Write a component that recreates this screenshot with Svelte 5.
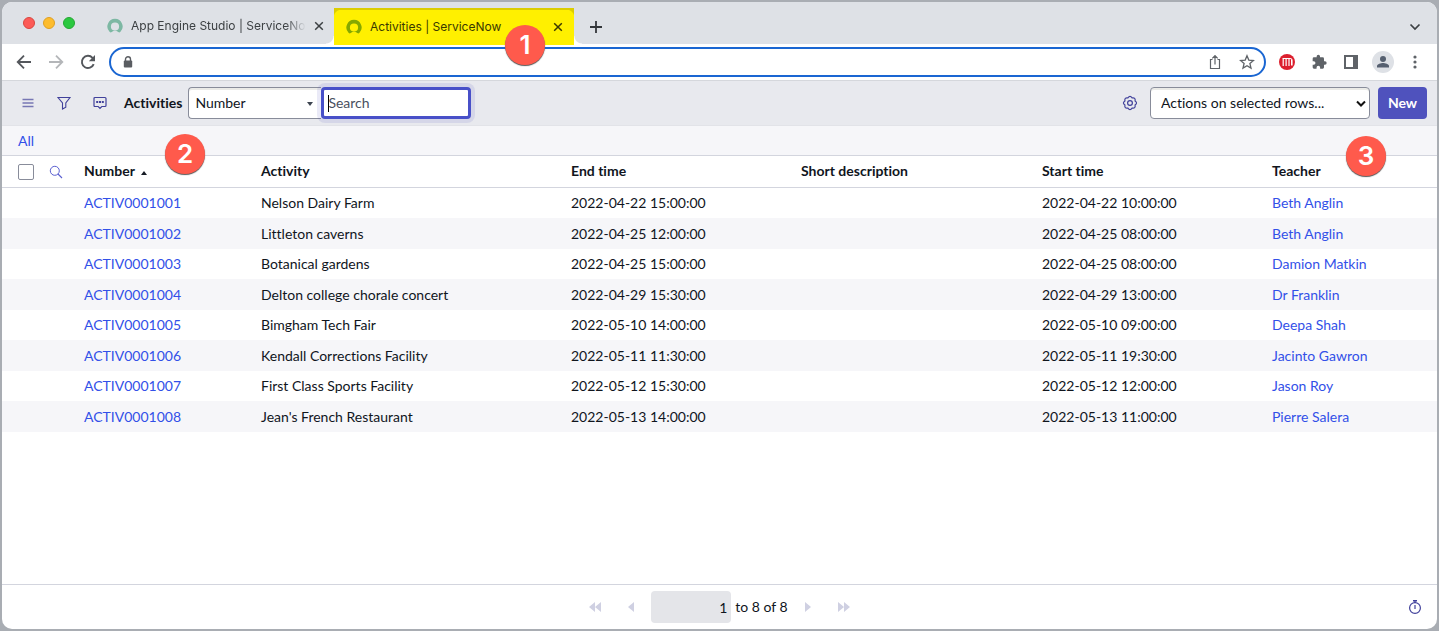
<script>
  const columns = ['Activity', 'End time', 'Short description', 'Start time'];
  const rows = [
    ['ACTIV0001001', 'Nelson Dairy Farm', '2022-04-22 15:00:00', '', '2022-04-22 10:00:00', 'Beth Anglin'],
    ['ACTIV0001002', 'Littleton caverns', '2022-04-25 12:00:00', '', '2022-04-25 08:00:00', 'Beth Anglin'],
    ['ACTIV0001003', 'Botanical gardens', '2022-04-25 15:00:00', '', '2022-04-25 08:00:00', 'Damion Matkin'],
    ['ACTIV0001004', 'Delton college chorale concert', '2022-04-29 15:30:00', '', '2022-04-29 13:00:00', 'Dr Franklin'],
    ['ACTIV0001005', 'Bimgham Tech Fair', '2022-05-10 14:00:00', '', '2022-05-10 09:00:00', 'Deepa Shah'],
    ['ACTIV0001006', 'Kendall Corrections Facility', '2022-05-11 11:30:00', '', '2022-05-11 19:30:00', 'Jacinto Gawron'],
    ['ACTIV0001007', 'First Class Sports Facility', '2022-05-12 15:30:00', '', '2022-05-12 12:00:00', 'Jason Roy'],
    ['ACTIV0001008', "Jean's French Restaurant", '2022-05-13 14:00:00', '', '2022-05-13 11:00:00', 'Pierre Salera']
  ];
</script>

{#snippet favicon(color)}
  <svg class="favicon" width="16" height="16" viewBox="0 0 16 16" aria-hidden="true">
    <path d="M8 .8A7.700 7.700 0 0 0 2.700 14c.6.6 1.400.6 2 .1a5.400 5.400 0 0 1 6.600 0c.6.5 1.400.5 2-.1A7.700 7.700 0 0 0 8 .8Zm0 11.800a4.100 4.100 0 1 1 0-8.200 4.100 4.100 0 0 1 0 8.200Z" fill={color} />
  </svg>
{/snippet}

{#snippet cross()}
  <svg width="10" height="10" viewBox="0 0 10 10" aria-hidden="true">
    <path d="M1.200 1.200l7.600 7.600M8.800 1.200L1.200 8.800" stroke="currentColor" stroke-width="1.500" />
  </svg>
{/snippet}

<div class="frame">
  <div class="window">
    <div class="tabstrip">
      <div class="lights"><i class="red"></i><i class="amber"></i><i class="green"></i></div>
      <div class="tab">
        {@render favicon('#7db8a3')}
        <span class="tab-title faded">App Engine Studio | ServiceNow</span>
        <button aria-label="Close tab">{@render cross()}</button>
      </div>
      <div class="tab active">
        {@render favicon('#85a800')}
        <span class="tab-title">Activities | ServiceNow</span>
        <button aria-label="Close tab">{@render cross()}</button>
        <span class="badge one">1</span>
      </div>
      <button class="plus" aria-label="New tab">
        <svg width="12" height="12" viewBox="0 0 12 12"><path d="M6 0v12M0 6h12" stroke="#33363a" stroke-width="1.800" /></svg>
      </button>
      <button class="tab-list" aria-label="Search tabs">
        <svg width="12" height="12" viewBox="0 0 12 12"><path d="M1.500 3.500L6 8l4.500-4.500" fill="none" stroke="#3c4043" stroke-width="1.700" /></svg>
      </button>
    </div>

    <div class="browserbar">
      <button aria-label="Back">
        <svg width="16" height="16" viewBox="0 0 16 16"><path d="M15 8H2M8 1.700L1.700 8 8 14.300" fill="none" stroke="#54575c" stroke-width="1.800" /></svg>
      </button>
      <button aria-label="Forward">
        <svg width="16" height="16" viewBox="0 0 16 16"><path d="M1 8h13M8 1.700L14.300 8 8 14.300" fill="none" stroke="#b4b6b9" stroke-width="1.800" /></svg>
      </button>
      <button aria-label="Reload">
        <svg width="16" height="16" viewBox="0 0 16 16"><path d="M13.700 10.100A6.100 6.100 0 1 1 12.500 3.800L14 5.300" fill="none" stroke="#54575c" stroke-width="1.900" /><path d="M15 1v6.200H8.800z" fill="#54575c" /></svg>
      </button>
      <div class="address">
        <svg width="10" height="12" viewBox="0 0 10 12" aria-hidden="true"><path d="M2.500 5V3.300a2.500 2.500 0 0 1 5 0V5" fill="none" stroke="#5a5d62" stroke-width="1.400" /><rect x="0.800" y="4.500" width="8.400" height="7" rx="1" fill="#5a5d62" /></svg>
        <input class="url" type="text" aria-label="Address" />
        <button aria-label="Share">
          <svg width="16" height="16" viewBox="0 0 16 16"><path d="M5.500 5.500h-2v9h9v-9h-2M8 10.500V1.800M5.300 4.300L8 1.600l2.700 2.700" fill="none" stroke="#5f6368" stroke-width="1.200" /></svg>
        </button>
        <button aria-label="Bookmark">
          <svg width="16" height="16" viewBox="0 0 16 16"><path d="M8 1.800l1.800 4.300 4.700.4-3.600 3 1.100 4.600L8 11.700l-4 2.400 1.100-4.600-3.600-3 4.700-.4z" fill="none" stroke="#5f6368" stroke-width="1.300" /></svg>
        </button>
      </div>
      <button aria-label="Extension">
        <svg width="16" height="16" viewBox="0 0 16 16"><circle cx="8" cy="8" r="8" fill="#dc1f2e" /><path d="M3.500 4.500h7.500q2 0 2 2v5M4.200 4v8M7.100 4v8M10 4v8M12.600 6v5.500" fill="none" stroke="#fff" stroke-width="1.200" /></svg>
      </button>
      <button aria-label="Extensions">
        <svg width="16" height="16" viewBox="0 0 24 24"><path d="M21 11h-1.500V7a2 2 0 0 0-2-2h-4V3.500a2.500 2.500 0 0 0-5 0V5h-4a2 2 0 0 0-2 2v3.800H4a2.700 2.700 0 0 1 0 5.400H2.500V20a2 2 0 0 0 2 2h3.800v-1.500a2.700 2.700 0 0 1 5.400 0V22h3.800a2 2 0 0 0 2-2v-4H21a2.500 2.500 0 0 0 0-5z" fill="#5f6368" /></svg>
      </button>
      <button aria-label="Side panel">
        <svg width="16" height="16" viewBox="0 0 16 16"><rect x="1" y="1" width="14" height="14" fill="#5f6368" /><rect x="3" y="3" width="7" height="10" fill="#fff" /></svg>
      </button>
      <button class="profile" aria-label="Profile">
        <svg width="22" height="22" viewBox="0 0 22 22"><circle cx="11" cy="11" r="11" fill="#dee1e6" /><circle cx="11" cy="8" r="3" fill="#566070" /><path d="M5 16.500v-1.500c0-2 4-3 6-3s6 1 6 3v1.500z" fill="#566070" /></svg>
      </button>
      <button aria-label="Menu">
        <svg width="16" height="16" viewBox="0 0 16 16"><g fill="#5f6368"><circle cx="8" cy="3" r="1.600" /><circle cx="8" cy="8" r="1.600" /><circle cx="8" cy="13" r="1.600" /></g></svg>
      </button>
    </div>

    <header>
      <button aria-label="List controls">
        <svg width="16" height="16" viewBox="0 0 16 16"><path d="M2.500 4.500h11M2.500 8h11M2.500 11.500h11" stroke="#7777b4" stroke-width="1.700" /></svg>
      </button>
      <button aria-label="Filter">
        <svg width="16" height="16" viewBox="0 0 16 16"><path d="M2 2.500h12L9.800 8v4.200L6.500 14V8z" fill="none" stroke="#41419b" stroke-width="1.100" /></svg>
      </button>
      <button aria-label="Activity stream">
        <svg width="16" height="16" viewBox="0 0 16 16"><path d="M3 2.500h10q1 0 1 1v7q0 1-1 1H9.800L8 13.300 6.200 11.500H3q-1 0-1-1v-7q0-1 1-1z" fill="none" stroke="#41419b" stroke-width="1.200" /><path d="M4.200 7h2M7 7h2M9.800 7h2" stroke="#41419b" stroke-width="2" /></svg>
      </button>
      <h1>Activities</h1>
      <div class="search-group">
        <div class="field-pick">
          <select aria-label="Search field"><option>Number</option></select>
          <i></i>
        </div>
        <label class="search"><span class="caret"></span><input type="text" placeholder="Search" aria-label="Search" /></label>
      </div>
      <button class="gear" aria-label="Personalize list">
        <svg width="16" height="16" viewBox="0 0 16 16"><path d="M5.900 2.900Q8 0 10.100 2.900Q13.700 2.300 13.100 5.900Q16 8 13.100 10.100Q13.700 13.700 10.100 13.100Q8 16 5.900 13.100Q2.300 13.700 2.900 10.100Q0 8 2.900 5.900Q2.300 2.300 5.900 2.900z" fill="none" stroke="#41419b" stroke-width="1.200" /><circle cx="8" cy="8" r="2.400" fill="none" stroke="#41419b" stroke-width="1.200" /></svg>
      </button>
      <div class="actions">
        <select aria-label="Actions on selected rows"><option>Actions on selected rows...</option></select>
        <svg width="10" height="8" viewBox="0 0 10 8" aria-hidden="true"><path d="M1 1.500L5 5.500l4-4" fill="none" stroke="#111" stroke-width="2" /></svg>
      </div>
      <button class="new">New</button>
    </header>

    <nav><a href="#all">All</a></nav>

    <main>
      <table>
        <colgroup>
          <col class="c-check" /><col class="c-find" /><col class="c-number" /><col class="c-activity" />
          <col class="c-time" /><col class="c-short" /><col class="c-time" /><col class="c-teacher" />
        </colgroup>
        <thead>
          <tr>
            <th class="check"><input type="checkbox" aria-label="Select all" /></th>
            <th class="find">
              <button aria-label="Show column search">
                <svg width="14" height="14" viewBox="0 0 14 14"><circle cx="5.800" cy="5.800" r="4.500" fill="none" stroke="#5a5fd0" /><path d="M9 9l4 4" stroke="#5a5fd0" stroke-width="1.100" /></svg>
              </button>
            </th>
            <th>Number <i class="sort"></i><span class="badge two">2</span></th>
            {#each columns as column}<th>{column}</th>{/each}
            <th>Teacher<span class="badge three">3</span></th>
          </tr>
        </thead>
        <tbody>
          {#each rows as row}
            <tr>
              <td></td>
              <td></td>
              {#each row as cell, i}
                <td>{#if i === 0 || i === 5}<a href="#record">{cell}</a>{:else}{cell}{/if}</td>
              {/each}
            </tr>
          {/each}
        </tbody>
      </table>
    </main>

    <footer>
      <div class="pager">
        <button aria-label="First page"><svg width="14" height="10" viewBox="0 0 14 10"><path d="M7 0v10L1 5zM13 0v10L7 5z" /></svg></button>
        <button aria-label="Previous page"><svg width="14" height="10" viewBox="0 0 14 10"><path d="M10 0v10L4 5z" /></svg></button>
        <div class="range"><input type="text" value="1" aria-label="First row" /><span>to 8 of 8</span></div>
        <button aria-label="Next page"><svg width="14" height="10" viewBox="0 0 14 10"><path d="M4 0v10l6-5z" /></svg></button>
        <button aria-label="Last page"><svg width="14" height="10" viewBox="0 0 14 10"><path d="M1 0v10l6-5zM7 0v10l6-5z" /></svg></button>
      </div>
      <button class="timer" aria-label="Response time">
        <svg width="14" height="14" viewBox="0 0 14 14"><circle cx="7" cy="8" r="5.400" fill="none" stroke="#41419b" stroke-width="1.200" /><path d="M5 .8h4" stroke="#41419b" stroke-width="1.600" /><path d="M7 1v2M7 5v4" stroke="#41419b" stroke-width="1.200" /></svg>
      </button>
    </footer>
  </div>
</div>

<style>
  :global(body) {
    background: #a9adb3;
  }
  * {
    box-sizing: border-box;
  }
  .frame {
    display: flex;
    min-height: 100vh;
    padding: 2px;
    background: #a9adb3;
    font: 14px/20px Lato, sans-serif;
    font-variant-ligatures: none;
    color: #10151d;
  }
  .window {
    flex: 1;
    min-width: 0;
    display: flex;
    flex-direction: column;
    overflow: hidden;
    border-radius: 10px;
    background: #fff;
  }
  button {
    display: flex;
    align-items: center;
    justify-content: center;
    flex: none;
    padding: 0;
    border: 0;
    background: none;
    color: inherit;
    font: inherit;
  }
  svg {
    display: block;
    flex: none;
  }
  a {
    color: #3250e8;
    text-decoration: none;
  }

  .tabstrip {
    display: flex;
    align-items: flex-end;
    height: 42px;
    padding-right: 16px;
    background: #dee1e6;
    font: 12px/16px Inter, sans-serif;
  }
  .lights {
    display: flex;
    align-items: center;
    align-self: stretch;
    gap: 8px;
    width: 92px;
    padding-left: 21px;
  }
  .lights i {
    width: 12px;
    height: 12px;
    border: 1px solid #d9463f;
    border-radius: 50%;
    background: #fc5b57;
  }
  .lights .amber {
    border-color: #dfa023;
    background: #fdbc2e;
  }
  .lights .green {
    border-color: #24a832;
    background: #2bc840;
  }
  .tab {
    position: relative;
    display: flex;
    align-items: center;
    gap: 8px;
    width: 240px;
    height: 36px;
    padding: 0 10px 0 13px;
    color: #3c4043;
  }
  .tab.active {
    z-index: 2;
    height: 37px;
    margin-bottom: -1px;
    padding: 0 11px 0 12px;
    background: radial-gradient(circle at 8px 8px, #fff000 8px, #dccd00 9px) left 2px / 8px 8px no-repeat,
      radial-gradient(circle at 0 8px, #fff000 8px, #dccd00 9px) right 2px / 8px 8px no-repeat,
      linear-gradient(#dccd00 2px, #fff000 2px);
    color: #3a3900;
  }
  .tab.active::before,
  .tab.active::after {
    content: '';
    position: absolute;
    bottom: 1px;
    width: 8px;
    height: 8px;
  }
  .tab.active::before {
    right: 100%;
    background: radial-gradient(circle at 0 0, #dee1e6 7px, #fff 8px);
  }
  .tab.active::after {
    left: 100%;
    background: radial-gradient(circle at 100% 0, #dee1e6 7px, #fff 8px);
  }
  .tab-title {
    flex: 1;
    min-width: 0;
    overflow: hidden;
    white-space: nowrap;
  }
  .faded {
    mask-image: linear-gradient(90deg, #000 88%, transparent);
  }
  .plus {
    width: 20px;
    height: 34px;
    margin-left: 12px;
  }
  .tab-list {
    height: 34px;
    margin-left: auto;
  }

  .badge {
    position: absolute;
    z-index: 3;
    display: flex;
    align-items: center;
    justify-content: center;
    width: 40px;
    height: 40px;
    border-radius: 50%;
    background: #ff5a4c;
    box-shadow: 0 1px 1px #555;
    color: #fff;
    font: 600 26px/40px Inter, sans-serif;
  }
  .one {
    top: 17px;
    right: 29px;
  }
  .two {
    top: -22px;
    left: 89px;
  }
  .three {
    top: -20px;
    right: 51px;
  }

  .browserbar {
    display: flex;
    align-items: center;
    gap: 12px;
    height: 37px;
    padding: 0 12px;
    border-bottom: 1px solid #d5d7dc;
  }
  .browserbar > button {
    width: 20px;
  }
  .address {
    flex: 1;
    display: flex;
    align-items: center;
    gap: 12px;
    height: 30px;
    margin: 0 -1px;
    padding: 0 7px 0 12px;
    border: 2px solid #1a66d2;
    border-radius: 15px;
  }
  .address button {
    width: 20px;
  }
  .url {
    flex: 1;
    min-width: 0;
    border: 0;
    outline: 0;
    background: none;
    font: 14px/20px Roboto, sans-serif;
  }

  header {
    display: flex;
    align-items: center;
    height: 45px;
    padding: 0 10px;
    border-bottom: 1px solid #e2e3e8;
    background: #e8e9ee;
  }
  header > button {
    width: 32px;
    height: 32px;
    margin-right: 4px;
  }
  h1 {
    margin: 0 6px 0 4px;
    font-size: 14px;
    line-height: 20px;
  }
  select {
    width: 100%;
    height: 32px;
    border: 1px solid #888c9a;
    border-radius: 4px;
    background: #fff;
    box-shadow: inset 0 2px #ebebe8;
    color: inherit;
    font: inherit;
    appearance: none;
  }
  .search-group {
    display: flex;
  }
  .field-pick,
  .actions {
    position: relative;
  }
  .field-pick {
    width: 133px;
  }
  .field-pick select {
    padding: 0 6px;
    border-right: 0;
    border-radius: 4px 0 0 4px;
  }
  .field-pick i {
    position: absolute;
    top: 15px;
    right: 8px;
    border: 3px solid transparent;
    border-top: 4px solid #3d4450;
    border-bottom: 0;
  }
  .search {
    position: relative;
    display: flex;
    width: 150px;
    height: 32px;
    border: 3px solid #4850c8;
    border-radius: 4px;
    box-shadow: 0 0 0 4px rgba(79, 82, 189, 0.12);
    background: #fff;
  }
  .search input {
    width: 100%;
    padding: 0 4px;
    border: 0;
    outline: 0;
    background: none;
    font: inherit;
  }
  .search input::placeholder {
    color: #4a5060;
  }
  .caret {
    position: absolute;
    top: 5px;
    left: 4px;
    width: 1px;
    height: 17px;
    background: #000;
  }
  header .gear {
    margin-left: auto;
  }
  .actions {
    width: 220px;
  }
  .actions select {
    padding: 0 10px;
  }
  .actions svg {
    position: absolute;
    top: 13px;
    right: 4px;
  }
  header .new {
    width: 49px;
    margin: 0 0 0 8px;
    border-radius: 4px;
    background: #4f52bd;
    color: #fff;
    font-weight: bold;
  }

  nav {
    height: 30px;
    padding: 5px 16px;
    border-bottom: 1px solid #d3d5de;
    background: #f6f6f9;
  }

  main {
    flex: 1;
  }
  table {
    width: 100%;
    table-layout: fixed;
    border-collapse: separate;
    border-spacing: 0;
  }
  .c-check { width: 40px; }
  .c-find { width: 34px; }
  .c-number { width: 177px; }
  .c-activity { width: 310px; }
  .c-time { width: 230px; }
  .c-short { width: 241px; }
  .c-teacher { width: 173px; }
  th,
  td {
    padding: 0 8px;
    text-align: left;
    white-space: nowrap;
  }
  th {
    position: relative;
    height: 32px;
    padding-bottom: 2px;
    border-bottom: 1px solid #d3d5de;
  }
  .check {
    padding: 0 16px;
  }
  .find {
    padding: 0 7px;
  }
  .check input {
    display: block;
    width: 16px;
    height: 16px;
    margin: 0;
    border: 1px solid #888c9a;
    border-radius: 2px;
    background: #fff;
    appearance: none;
  }
  .sort {
    display: inline-block;
    margin: 0 0 1px 3px;
    border: 3px solid transparent;
    border-top: 0;
    border-bottom: 4px solid #161b24;
  }
  td {
    height: 30px;
  }
  tr:nth-child(even) td {
    height: 31px;
    background: #f6f6f9;
  }

  footer {
    position: relative;
    display: flex;
    align-items: center;
    justify-content: center;
    height: 45px;
    border-top: 1px solid #d3d5de;
  }
  .pager {
    display: flex;
    align-items: center;
    gap: 4px;
  }
  .pager button {
    width: 32px;
    height: 32px;
    fill: #cfd0e2;
  }
  .range {
    display: flex;
    align-items: center;
    gap: 4px;
  }
  .range input {
    width: 80px;
    height: 32px;
    padding: 0 4px;
    border: 0;
    border-radius: 4px;
    background: #e4e5e9;
    color: inherit;
    font: inherit;
    text-align: right;
  }
  .timer {
    position: absolute;
    right: 15px;
  }
</style>
